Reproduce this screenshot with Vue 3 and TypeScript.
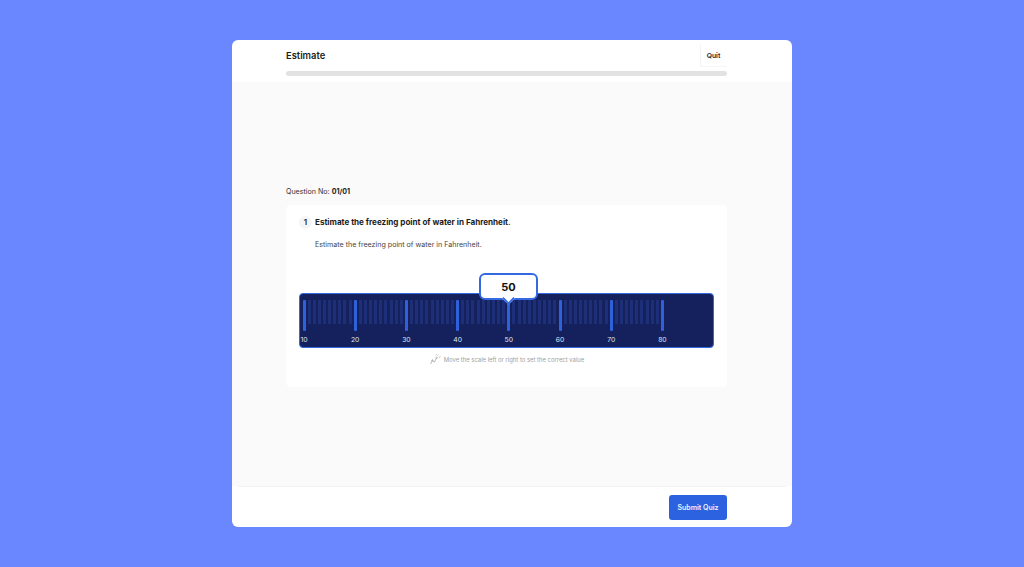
<template>
  <div class="page">
    <div class="window">
      <header class="top">
        <div class="top-row">
          <h1 class="quiz-name">Estimate</h1>
          <button class="quit">Quit</button>
        </div>
        <div class="progress"></div>
      </header>

      <main class="body">
        <p class="counter">Question No: <b>01/01</b></p>
        <section class="card">
          <div class="q-head">
            <span class="q-num">1</span>
            <h2 class="q-title">Estimate the freezing point of water in Fahrenheit.</h2>
          </div>
          <p class="q-desc">Estimate the freezing point of water in Fahrenheit.</p>

          <div class="scale-wrap">
            <div class="scale">
              <div class="track">
                <div v-for="t in ticks" :key="t.value" class="tick" :class="{ major: t.major }" :style="{ left: t.left + 'px' }">
                  <span v-if="t.major" class="tick-label">{{ t.value }}</span>
                </div>
              </div>
            </div>
            <div class="bubble">50</div>
          </div>

          <div class="hint">
            <svg class="hint-icon" width="11" height="11" viewBox="0 0 11 11" fill="none" stroke="#a8a8a8" stroke-width="0.8">
              <path d="M0.6 10 L2.4 6.4 L4.4 8.2 L6.6 3.8" />
              <circle cx="2.4" cy="6.4" r="0.7" />
              <circle cx="6.6" cy="3.8" r="0.7" />
              <path d="M7.6 1.6 L8.6 0.6 M9 3.2 L10.4 2.6 M6.4 1.2 L6.2 0.2" />
            </svg>
            <span>Move the scale left or right to set the correct value</span>
          </div>
        </section>
      </main>

      <footer class="bottom">
        <button class="submit">Submit Quiz</button>
      </footer>
    </div>
  </div>
</template>

<script setup lang="ts">
interface Tick {
  value: number
  left: number
  major: boolean
}

// one tick per unit, 10 -> 80
const UNIT = 5.12
const ticks: Tick[] = []
for (let v = 10; v <= 80; v++) {
  ticks.push({ value: v, left: (v - 10) * UNIT, major: v % 10 === 0 })
}
</script>

<style>
html,
body {
  margin: 0;
  background: #6a87ff;
}
</style>

<style scoped>
.page {
  width: 1024px;
  height: 567px;
  box-sizing: border-box;
  padding-top: 40px;
  display: flex;
  justify-content: center;
  background: #6a87ff;
  font-family: Inter, "Liberation Sans", sans-serif;
  color: #1c1c1c;
}
.window {
  width: 560px;
  height: 487px;
  background: #fff;
  border-radius: 6px;
  overflow: hidden;
  display: flex;
  flex-direction: column;
}
.top {
  height: 42px;
  flex: none;
  box-sizing: border-box;
  padding: 0 65px 0 54px;
}
.top-row {
  height: 31px;
  display: flex;
  align-items: center;
  justify-content: space-between;
}
.quiz-name {
  margin: 0;
  font-size: 9.4px;
  font-weight: 600;
  line-height: 33px;
}
.quit {
  border: 0;
  border-left: 1px solid #f4f4f4;
  border-bottom: 1px solid #f6f6f6;
  background: #fff;
  font: 600 6.8px Inter, "Liberation Sans", sans-serif;
  color: #222;
  height: 22px;
  width: 27px;
  padding: 0 1px 0 0;
}
.progress {
  height: 5px;
  background: #e2e2e2;
  border-radius: 3px;
}
.body {
  flex: 1;
  background: #fafafa;
  padding: 105px 65px 0 54px;
}
.counter {
  margin: 0 0 8px;
  font-size: 7.1px;
  line-height: 10px;
  color: #333;
}
.counter b {
  font-weight: 700;
  color: #1c1c1c;
}
.card {
  height: 182px;
  box-sizing: border-box;
  background: #fff;
  border-radius: 5px;
  padding: 11px 12px 0 13px;
}
.q-head {
  display: flex;
  align-items: center;
  gap: 3px;
}
.q-num {
  width: 13px;
  height: 13px;
  border-radius: 50%;
  background: #f5f5f5;
  font-size: 8px;
  font-weight: 600;
  line-height: 13px;
  text-align: center;
}
.q-title {
  margin: 0;
  font-size: 8.1px;
  font-weight: 700;
  letter-spacing: -0.02px;
  line-height: 13px;
}
.q-desc {
  margin: 11px 0 0 16px;
  font-size: 7.1px;
  line-height: 10px;
  color: #444;
}
.scale-wrap {
  position: relative;
  margin-top: 23px;
  height: 76px;
  padding-top: 20px;
  box-sizing: border-box;
}
.scale {
  width: 415px;
  height: 55px;
  box-sizing: border-box;
  background: #14215c;
  border: 1px solid #3569e2;
  border-radius: 4px;
  overflow: hidden;
}
.track {
  position: relative;
  height: 100%;
  margin-left: 2.5px;
}
.tick {
  position: absolute;
  top: 6px;
  width: 3px;
  height: 24px;
  background: #1d2f78;
}
.tick.major {
  width: 3px;
  height: 31px;
  background: #2f62da;
  border-radius: 1px;
}
.tick-label {
  position: absolute;
  top: 35px;
  left: 50%;
  transform: translateX(-50%);
  font-size: 6.8px;
  line-height: 9px;
  color: #dfe4f5;
}
.bubble {
  position: absolute;
  top: 0;
  left: 180px;
  width: 59px;
  height: 27px;
  box-sizing: border-box;
  background: #fff;
  border: 2px solid #3569e2;
  border-radius: 6px;
  text-align: center;
  font-size: 11px;
  font-weight: 700;
  line-height: 24px;
  color: #111;
}
.bubble::after {
  content: "";
  position: absolute;
  left: 22.5px;
  bottom: -5px;
  width: 7px;
  height: 7px;
  background: #fff;
  border-right: 2px solid #3569e2;
  border-bottom: 2px solid #3569e2;
  transform: rotate(45deg);
}
.hint {
  margin-top: 5px;
  display: flex;
  align-items: center;
  justify-content: center;
  gap: 3px;
  font-size: 5.9px;
  line-height: 10px;
  color: #a0a0a0;
}
.bottom {
  height: 41px;
  flex: none;
  box-sizing: border-box;
  border-top: 1px solid #f2f2f2;
  margin: 0 6px;
  padding: 8px 59px 0 0;
  display: flex;
  justify-content: flex-end;
  align-items: flex-start;
}
.submit {
  width: 58px;
  height: 25px;
  border: 0;
  border-radius: 3px;
  background: #2c62e0;
  color: #eef2ff;
  font: 600 7px Inter, "Liberation Sans", sans-serif;
  padding: 0;
}
</style>
